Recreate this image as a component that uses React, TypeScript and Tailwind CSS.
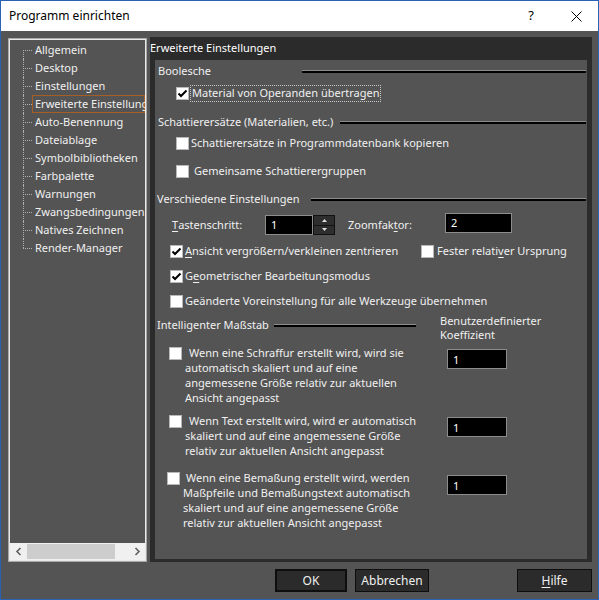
import React from "react";

const FONT = { fontFamily: '"Noto Sans", "Open Sans", sans-serif' };

function CheckBox({ checked = false }: { checked?: boolean }) {
  return (
    <div className="w-[13px] h-[13px] shrink-0 bg-white border border-[#b8b8b8] flex items-center justify-center">
      {checked && (
        <svg width="11" height="11" viewBox="0 0 11 11">
          <path d="M1.5 5.5 L4 8 L9.5 2.5" stroke="#000" strokeWidth="2" fill="none" />
        </svg>
      )}
    </div>
  );
}

function Rule({ className = "" }: { className?: string }) {
  return <div className={"h-[3px] bg-black border-t border-[#8c8c8c] " + className} />;
}

function TreeItem({
  label,
  selected = false,
  pos,
}: {
  label: string;
  selected?: boolean;
  pos: "first" | "mid" | "last";
}) {
  return (
    <div className="h-[18px] flex items-stretch">
      <div className="w-[13px] shrink-0" />
      <div className="relative w-[9px] shrink-0">
        <div
          className={
            "absolute left-0 border-l border-dotted border-[#b0b0b0] " +
            (pos === "first" ? "top-[9px] bottom-0" : pos === "last" ? "top-0 h-[9px]" : "top-0 bottom-0")
          }
        />
        <div className="absolute left-0 right-0 top-[9px] border-t border-dotted border-[#b0b0b0]" />
      </div>
      <div
        className={
          "h-[18px] flex items-center pl-[2px] pr-[2px] border whitespace-nowrap " +
          (selected ? "border-[#a65e27] w-[113px]" : "border-transparent")
        }
      >
        {label}
      </div>
    </div>
  );
}

function Input({ value, className = "" }: { value: string; className?: string }) {
  return (
    <div className={"h-[20px] bg-black border border-[#8c8c8c] flex items-center pl-[5px] text-white " + className}>
      {value}
    </div>
  );
}

export default function App() {
  const tree = [
    "Allgemein",
    "Desktop",
    "Einstellungen",
    "Erweiterte Einstellungen",
    "Auto-Benennung",
    "Dateiablage",
    "Symbolbibliotheken",
    "Farbpalette",
    "Warnungen",
    "Zwangsbedingungen",
    "Natives Zeichnen",
    "Render-Manager",
  ];
  return (
    <div
      style={FONT}
      className="w-[599px] h-[600px] border border-[#2b62b5] bg-[#545454] flex flex-col text-[11px] text-[#f0f0f0] overflow-hidden"
    >
      {/* Title bar */}
      <div className="h-[30px] bg-white flex items-center text-black shrink-0">
        <div className="pl-[8px] text-[12px]">Programm einrichten</div>
        <div className="ml-auto w-[30px] flex justify-center text-[13px] mr-[24px]">?</div>
        <div className="w-[12px] flex justify-center mr-[16px]">
          <svg width="11" height="11" viewBox="0 0 11 11">
            <path d="M0.5 0.5 L10.5 10.5 M10.5 0.5 L0.5 10.5" stroke="#000" strokeWidth="1" />
          </svg>
        </div>
      </div>

      {/* Body */}
      <div className="flex-1 flex flex-col pl-[7px] pr-[6px] pt-[6px] pb-[6px]">
        <div className="flex items-start h-[525px] shrink-0">
          {/* Left tree panel */}
          <div className="mt-[1px] w-[139px] h-[524px] border border-[#a8a8a8] shrink-0">
            <div className="h-full border border-[#e8e8e8] flex flex-col overflow-hidden">
              <div className="flex-1 pt-[1px] overflow-hidden">
                {tree.map((t, i) => (
                  <TreeItem
                    key={t}
                    label={t}
                    selected={i === 3}
                    pos={i === 0 ? "first" : i === tree.length - 1 ? "last" : "mid"}
                  />
                ))}
              </div>
              <div className="h-[17px] bg-[#f0f0f0] flex items-stretch shrink-0">
                <div className="w-[17px] flex items-center justify-center">
                  <svg width="8" height="9" viewBox="0 0 8 9">
                    <path d="M5.5 1 L2 4.5 L5.5 8" stroke="#606060" strokeWidth="1.6" fill="none" />
                  </svg>
                </div>
                <div className="w-[88px] my-[1px] bg-[#cdcdcd]" />
                <div className="flex-1" />
                <div className="w-[17px] flex items-center justify-center">
                  <svg width="8" height="9" viewBox="0 0 8 9">
                    <path d="M2.5 1 L6 4.5 L2.5 8" stroke="#606060" strokeWidth="1.6" fill="none" />
                  </svg>
                </div>
              </div>
            </div>
          </div>

          {/* Right frame */}
          <div className="ml-[3px] w-[442px] h-[525px] bg-[#2b2b2b] flex flex-col px-[5px] pb-[3px]">
            <div className="h-[23px] shrink-0 flex items-center -ml-[5px] text-white">
              Erweiterte Einstellungen
            </div>
            <div className="flex-1 bg-[#545454] flex flex-col pr-[1px]">
              {/* Boolesche */}
              <div className="mt-[1px] h-[20px] flex items-center">
                <div className="w-[147px] pl-[3px] whitespace-nowrap">Boolesche</div>
                <Rule className="flex-1" />
              </div>
              <div className="mt-[2px] h-[20px] flex items-center pl-[21px]">
                <CheckBox checked />
                <div className="ml-[1px] h-[17px] w-[191px] border border-dotted border-[#c8c8c8] flex items-center pl-[1px] whitespace-nowrap">
                  Material von Operanden übertragen
                </div>
              </div>

              {/* Schattierersätze */}
              <div className="mt-[9px] h-[20px] flex items-center">
                <div className="w-[185px] pl-[3px] whitespace-nowrap">Schattierersätze (Materialien, etc.)</div>
                <Rule className="flex-1" />
              </div>
              <div className="mt-[1px] h-[20px] flex items-center pl-[21px]">
                <CheckBox />
                <div className="ml-[2px] whitespace-nowrap">Schattierersätze in Programmdatenbank kopieren</div>
              </div>
              <div className="mt-[8px] h-[20px] flex items-center pl-[21px]">
                <CheckBox />
                <div className="ml-[5px] whitespace-nowrap">Gemeinsame Schattierergruppen</div>
              </div>

              {/* Verschiedene */}
              <div className="mt-[8px] h-[20px] flex items-center">
                <div className="w-[156px] pl-[2px] whitespace-nowrap">Verschiedene Einstellungen</div>
                <Rule className="flex-1" />
              </div>
              <div className="mt-[6px] h-[20px] flex items-start pl-[17px]">
                <div className="w-[93px] h-[20px] flex items-center whitespace-nowrap">
                  <span className="underline underline-offset-2">T</span>astenschritt:
                </div>
                <Input value="1" className="w-[48px]" />
                <div className="w-[22px] h-[20px] flex flex-col">
                  <div className="flex-1 bg-[#2e2e2e] border border-[#111] flex items-center justify-center">
                    <svg width="5" height="3" viewBox="0 0 5 3">
                      <path d="M0 3 L2.5 0 L5 3 Z" fill="#e0e0e0" />
                    </svg>
                  </div>
                  <div className="flex-1 bg-[#2e2e2e] border border-[#111] border-t-0 flex items-center justify-center">
                    <svg width="5" height="3" viewBox="0 0 5 3">
                      <path d="M0 0 L2.5 3 L5 0 Z" fill="#e0e0e0" />
                    </svg>
                  </div>
                </div>
                <div className="ml-[13px] w-[97px] h-[20px] flex items-center whitespace-nowrap">
                  Zoomfak<span className="underline underline-offset-2">t</span>or:
                </div>
                <Input value="2" className="w-[67px] -mt-[2px]" />
              </div>

              <div className="mt-[6px] h-[20px] flex items-center pl-[15px]">
                <div className="w-[251px] flex items-center">
                  <CheckBox checked />
                  <div className="ml-[2px] whitespace-nowrap">
                    <span className="underline underline-offset-2">A</span>nsicht vergrößern/verkleinen zentrieren
                  </div>
                </div>
                <CheckBox />
                <div className="ml-[3px] whitespace-nowrap">
                  Fester relati<span className="underline underline-offset-2">v</span>er Ursprung
                </div>
              </div>
              <div className="mt-[5px] h-[20px] flex items-center pl-[15px]">
                <CheckBox checked />
                <div className="ml-[2px] whitespace-nowrap">
                  G<span className="underline underline-offset-2">e</span>ometrischer Bearbeitungsmodus
                </div>
              </div>
              <div className="mt-[5px] h-[20px] flex items-center pl-[15px]">
                <CheckBox />
                <div className="ml-[2px] whitespace-nowrap">Geänderte Voreinstellung für alle Werkzeuge übernehmen</div>
              </div>

              {/* Intelligenter Maßstab */}
              <div className="mt-[3px] h-[28px] flex items-start">
                <div className="w-[285px] h-[22px] flex items-center">
                  <div className="w-[119px] pl-[2px] whitespace-nowrap">Intelligenter Maßstab</div>
                  <Rule className="w-[142px]" />
                </div>
                <div className="leading-[14px]">
                  <div>Benutzerdefinierter</div>
                  <div>Koeffizient</div>
                </div>
              </div>

              {/* Block 1 */}
              <div className="mt-[3px] flex items-start pl-[14px] leading-[15px]">
                <div className="mt-[2px]">
                  <CheckBox />
                </div>
                <div className="ml-[3px] w-[262px]">
                  <div className="pl-[4px]">Wenn eine Schraffur erstellt wird, wird sie</div>
                  <div>automatisch skaliert und auf eine</div>
                  <div>angemessene Größe relativ zur aktuellen</div>
                  <div>Ansicht angepasst</div>
                </div>
                <Input value="1" className="mt-[4px] w-[60px]" />
              </div>

              {/* Block 2 */}
              <div className="mt-[8px] flex items-start pl-[14px] leading-[15px]">
                <div className="mt-[2px]">
                  <CheckBox />
                </div>
                <div className="ml-[3px] w-[262px]">
                  <div className="pl-[4px]">Wenn Text erstellt wird, wird er automatisch</div>
                  <div>skaliert und auf eine angemessene Größe</div>
                  <div>relativ zur aktuellen Ansicht angepasst</div>
                </div>
                <Input value="1" className="mt-[4px] w-[60px]" />
              </div>

              {/* Block 3 */}
              <div className="mt-[12px] flex items-start pl-[12px] leading-[15px]">
                <div className="mt-[2px]">
                  <CheckBox />
                </div>
                <div className="ml-[3px] w-[264px]">
                  <div className="pl-[3px]">Wenn eine Bemaßung erstellt wird, werden</div>
                  <div>Maßpfeile und Bemaßungstext automatisch</div>
                  <div>skaliert und auf eine angemessene Größe</div>
                  <div>relativ zur aktuellen Ansicht angepasst</div>
                </div>
                <Input value="1" className="mt-[5px] w-[60px]" />
              </div>
            </div>
          </div>
        </div>

        {/* Buttons */}
        <div className="mt-[7px] h-[23px] flex justify-end shrink-0 text-[12px]">
          <div className="w-[72px] h-[23px] bg-[#2b2b2b] border-2 border-[#0e0e0e] flex items-center justify-center">OK</div>
          <div className="ml-[8px] w-[74px] h-[23px] bg-[#2b2b2b] border border-[#0e0e0e] flex items-center justify-center">
            Abbrechen
          </div>
          <div className="ml-[88px] w-[75px] h-[23px] bg-[#2b2b2b] border border-[#0e0e0e] flex items-center justify-center">
            <span className="underline underline-offset-2">H</span>ilfe
          </div>
        </div>
      </div>
    </div>
  );
}
